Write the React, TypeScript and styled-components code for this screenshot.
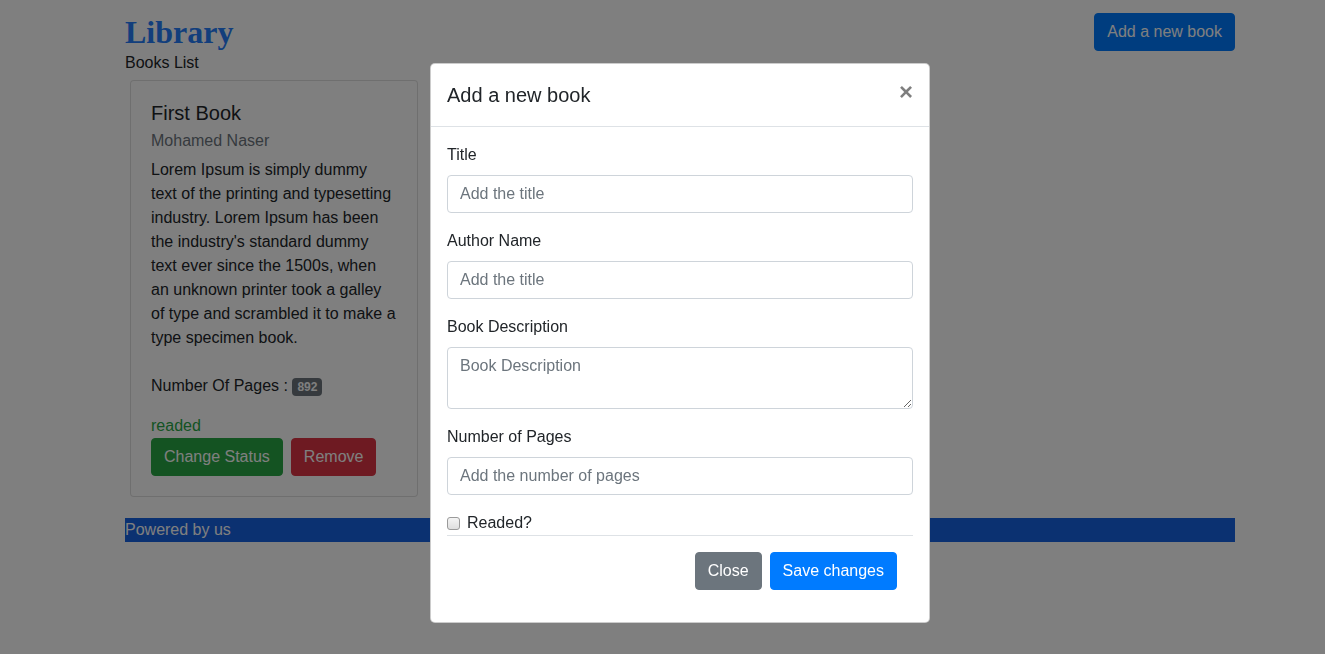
import React from 'react'
import styled, { createGlobalStyle } from 'styled-components'

const GlobalStyle = createGlobalStyle`
  * { box-sizing: border-box; }
  body {
    margin: 0;
    background: #fff;
    color: #212529;
    font-family: "Liberation Sans", Helvetica, Arial, sans-serif;
    font-size: 16px;
    line-height: 1.5;
  }
`

const book = {
  title: 'First Book',
  author: 'Mohamed Naser',
  description:
    "Lorem Ipsum is simply dummy text of the printing and typesetting industry. Lorem Ipsum has been the industry's standard dummy text ever since the 1500s, when an unknown printer took a galley of type and scrambled it to make a type specimen book.",
  pages: 892,
  status: 'readed',
}

const fields = [
  { label: 'Title', placeholder: 'Add the title' },
  { label: 'Author Name', placeholder: 'Add the title' },
  { label: 'Book Description', placeholder: 'Book Description', multiline: true },
  { label: 'Number of Pages', placeholder: 'Add the number of pages' },
]

const App = () => (
  <>
    <GlobalStyle />
    <Page>
      <Header>
        <Titles>
          <Brand>Library</Brand>
          <Sub>Books List</Sub>
        </Titles>
        <Button $variant="primary">Add a new book</Button>
      </Header>

      <Card>
        <CardTitle>{book.title}</CardTitle>
        <CardSubtitle>{book.author}</CardSubtitle>
        <CardText>
          {book.description}
          <br />
          <br />
          Number Of Pages : <Badge>{book.pages}</Badge>
        </CardText>
        <Status>{book.status}</Status>
        <Actions>
          <Button $variant="success">Change Status</Button>
          <Button $variant="danger">Remove</Button>
        </Actions>
      </Card>

      <Footer>Powered by us</Footer>
    </Page>

    <Backdrop>
      <Dialog>
        <ModalHeader>
          <ModalTitle>Add a new book</ModalTitle>
          <CloseX aria-label="Close">×</CloseX>
        </ModalHeader>
        <ModalBody>
          {fields.map(f => (
            <FormGroup key={f.label}>
              <Label>{f.label}</Label>
              {f.multiline ? (
                <TextArea rows={2} placeholder={f.placeholder} />
              ) : (
                <Input placeholder={f.placeholder} />
              )}
            </FormGroup>
          ))}
          <Check>
            <input type="checkbox" />
            <span>Readed?</span>
          </Check>
          <ModalFooter>
            <Button $variant="secondary">Close</Button>
            <Button $variant="primary">Save changes</Button>
          </ModalFooter>
        </ModalBody>
      </Dialog>
    </Backdrop>
  </>
)

export default App

// Styles
const colors: Record<string, string> = {
  primary: '#007bff',
  secondary: '#6c757d',
  success: '#28a745',
  danger: '#dc3545',
}

const Page = styled.div`
  width: 1110px;
  margin-left: 125px;
  padding-top: 13px;
`

const Header = styled.header`
  display: flex;
  justify-content: space-between;
  align-items: flex-start;
`

const Titles = styled.div`
  padding-top: 1px;
`

const Brand = styled.h1`
  margin: 0;
  font-family: "Liberation Serif", "Times New Roman", serif;
  font-size: 32px;
  line-height: 37px;
  font-weight: 700;
  color: #257df8;
`

const Sub = styled.div`
  font-size: 16px;
  line-height: 24px;
`

const Button = styled.button<{ $variant: string }>`
  display: inline-block;
  font-family: inherit;
  font-size: 16px;
  line-height: 24px;
  padding: 6px 12px;
  border: 1px solid ${p => colors[p.$variant]};
  border-radius: 4px;
  background: ${p => colors[p.$variant]};
  color: #fff;
  cursor: pointer;
`

const Card = styled.div`
  width: 288px;
  margin: 5px 0 0 5px;
  padding: 20px;
  border: 1px solid rgba(0, 0, 0, 0.125);
  border-radius: 4px;
  background: #fff;
`

const CardTitle = styled.h5`
  margin: 0 0 12px;
  font-size: 20px;
  font-weight: 500;
  line-height: 1.2;
`

const CardSubtitle = styled.h6`
  margin: -6px 0 8px;
  font-size: 16px;
  font-weight: 500;
  line-height: 1.2;
  color: #6c757d;
`

const CardText = styled.p`
  margin: 0 0 16px;
`

const Badge = styled.span`
  display: inline-block;
  padding: 3px 5px;
  font-size: 12px;
  font-weight: 700;
  line-height: 1;
  border-radius: 4px;
  background: #6c757d;
  color: #fff;
  vertical-align: baseline;
`

const Status = styled.div`
  color: #28a745;
`

const Actions = styled.div`
  display: flex;
  gap: 8px;
`

const Footer = styled.footer`
  margin-top: 21px;
  background: #1662e2;
  color: #fff;
  line-height: 24px;
`

const Backdrop = styled.div`
  position: fixed;
  inset: 0;
  background: rgba(0, 0, 0, 0.5);
  padding: 63px 0 0 430px;
`

const Dialog = styled.div`
  width: 500px;
  background: #fff;
  border: 1px solid rgba(0, 0, 0, 0.2);
  border-radius: 5px;
`

const ModalHeader = styled.div`
  display: flex;
  align-items: flex-start;
  padding: 16px;
  border-bottom: 1px solid #dee2e6;
`

const ModalTitle = styled.h5`
  margin: 0;
  font-size: 20px;
  font-weight: 500;
  line-height: 30px;
`

const CloseX = styled.button`
  margin: -16px -16px -16px auto;
  padding: 16px;
  background: transparent;
  border: 0;
  font-family: inherit;
  font-size: 24px;
  font-weight: 700;
  line-height: 1;
  color: #000;
  opacity: 0.5;
`

const ModalBody = styled.div`
  padding: 16px;
`

const FormGroup = styled.div`
  margin-bottom: 16px;
`

const Label = styled.label`
  display: block;
  margin-bottom: 8px;
`

const fieldStyle = `
  display: block;
  width: 100%;
  padding: 6px 12px;
  font-family: inherit;
  font-size: 16px;
  line-height: 24px;
  color: #495057;
  border: 1px solid #ced4da;
  border-radius: 4px;
  background: #fff;
  &::placeholder { color: #6c757d; }
`

const Input = styled.input`
  ${fieldStyle}
  height: 38px;
`

const TextArea = styled.textarea`
  ${fieldStyle}
  height: 62px;
  resize: vertical;
`

const Check = styled.label`
  display: flex;
  align-items: center;
  gap: 7px;
  line-height: 24px;

  input {
    appearance: none;
    width: 13px;
    height: 13px;
    margin: 0;
    border: 1px solid #9a9a9a;
    border-radius: 3px;
    background: linear-gradient(#f4f4f4, #dedede);
  }
`

const ModalFooter = styled.div`
  display: flex;
  justify-content: flex-end;
  gap: 8px;
  padding: 16px;
  border-top: 1px solid #dee2e6;
`
